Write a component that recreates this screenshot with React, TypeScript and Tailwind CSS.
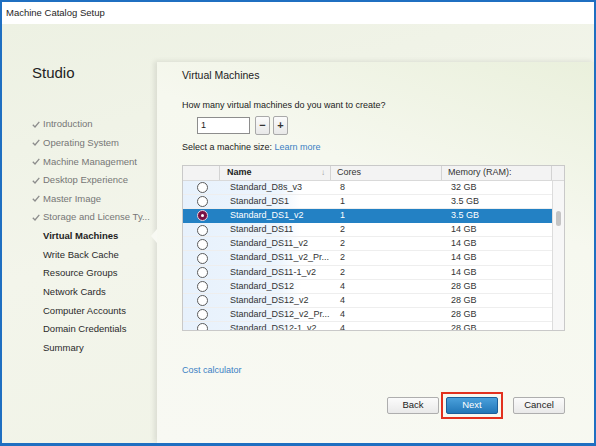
import React from "react";

const font = { fontFamily: '"Liberation Sans", Arial, sans-serif' };

const steps = [
  { label: "Introduction", done: true },
  { label: "Operating System", done: true },
  { label: "Machine Management", done: true },
  { label: "Desktop Experience", done: true },
  { label: "Master Image", done: true },
  { label: "Storage and License Ty...", done: true },
  { label: "Virtual Machines", current: true },
  { label: "Write Back Cache" },
  { label: "Resource Groups" },
  { label: "Network Cards" },
  { label: "Computer Accounts" },
  { label: "Domain Credentials" },
  { label: "Summary" },
];

const machines = [
  ["Standard_D8s_v3", "8", "32 GB"],
  ["Standard_DS1", "1", "3.5 GB"],
  ["Standard_DS1_v2", "1", "3.5 GB"],
  ["Standard_DS11", "2", "14 GB"],
  ["Standard_DS11_v2", "2", "14 GB"],
  ["Standard_DS11_v2_Pr...", "2", "14 GB"],
  ["Standard_DS11-1_v2", "2", "14 GB"],
  ["Standard_DS12", "4", "28 GB"],
  ["Standard_DS12_v2", "4", "28 GB"],
  ["Standard_DS12_v2_Pr...", "4", "28 GB"],
  ["Standard_DS12-1_v2", "4", "28 GB"],
];

function Check() {
  return (
    <svg width="8" height="7" viewBox="0 0 8 7" className="shrink-0">
      <path d="M0.8 3.8 L3 6 L7.3 0.9" fill="none" stroke="#8c8c8c" strokeWidth="1.3" />
    </svg>
  );
}

function Radio({ on }: { on?: boolean }) {
  if (on) {
    return (
      <div className="w-[11px] h-[11px] rounded-full bg-[#7a1244] border border-[#e8d6df] flex items-center justify-center">
        <div className="w-[3px] h-[3px] rounded-full bg-white" />
      </div>
    );
  }
  return <div className="w-[11px] h-[11px] rounded-full bg-white border border-[#5c5c5c]" />;
}

function Sidebar() {
  return (
    <div className="w-[155px] shrink-0 pl-[30px] pt-[40px]">
      <div className="text-[15px] leading-[18px] text-[#222]">Studio</div>
      <div className="mt-[33px] flex flex-col">
        {steps.map((s) => (
          <div key={s.label} className="h-[18.67px] flex items-center gap-[3px] text-[9.5px] whitespace-nowrap">
            <div className="w-[8px] flex justify-center">{s.done && <Check />}</div>
            <span
              className={
                s.current
                  ? "font-bold text-[#1e1e1e]"
                  : s.done
                  ? "text-[#767676]"
                  : "text-[#2a2a2a]"
              }
            >
              {s.label}
            </span>
          </div>
        ))}
      </div>
    </div>
  );
}

function MachineTable() {
  return (
    <div className="mt-[12px] w-[383px] h-[166px] border border-[#c9c9c9] bg-white flex flex-col text-[9px] text-[#333]">
      <div className="h-[15px] shrink-0 grid grid-cols-[37px_111px_111px_110px_12px] bg-[#f3f3f3] border-b border-[#d9d9d9]">
        <div className="border-r border-[#d3d3d3]" />
        <div className="border-r border-[#d3d3d3] flex items-center justify-between pl-[7px] pr-[5px] font-bold text-[#222]">
          <span>Name</span>
          <span className="text-[#9a9a9a] text-[8px]">↓</span>
        </div>
        <div className="border-r border-[#d3d3d3] flex items-center pl-[6px]">Cores</div>
        <div className="border-r border-[#d3d3d3] flex items-center pl-[6px]">Memory (RAM):</div>
        <div />
      </div>
      <div className="flex flex-1 min-h-0">
        <div className="flex-1 overflow-hidden bg-[linear-gradient(90deg,#e7f1fc_0px,#edf5fd_95px,#ffffff_118px)]">
          {machines.map(([name, cores, mem], i) => {
            const sel = i === 2;
            return (
              <div
                key={name}
                className={`h-[14.1px] shrink-0 grid grid-cols-[37px_111px_111px_110px] items-center border-b ${
                  sel ? "bg-[#2381c4] text-white border-[#2381c4]" : "border-[#eeeeee]"
                }`}
              >
                <div className="flex justify-center pl-[2px]">
                  <Radio on={sel} />
                </div>
                <div className="pl-[10px] whitespace-nowrap">{name}</div>
                <div className="pl-[9px]">{cores}</div>
                <div className="pl-[9px]">{mem}</div>
              </div>
            );
          })}
        </div>
        <div className="w-[12px] shrink-0 border-l border-[#dcdcdc] bg-[#f7f7f7] pt-[30px] flex justify-center">
          <div className="w-[5px] h-[15px] rounded-[3px] bg-[#c4c4c4]" />
        </div>
      </div>
    </div>
  );
}

function Btn({ children, primary }: { children: React.ReactNode; primary?: boolean }) {
  return (
    <div
      className={`w-[52px] h-[17px] flex items-center justify-center text-[9.5px] rounded-[2px] border ${
        primary
          ? "border-[#1b5f9a] text-white bg-[linear-gradient(180deg,#4aa0db,#2277b8)]"
          : "border-[#aeaeae] text-[#222] bg-[linear-gradient(180deg,#fbfbfb,#e9e9e9)]"
      }`}
    >
      {children}
    </div>
  );
}

function Panel() {
  return (
    <div className="relative flex-1 mt-[38px] pl-[25px] pr-[30px] pt-[7px] bg-[linear-gradient(200deg,#eaf0dc_0%,#f6f8ef_35%,#f8f9f3_100%)] shadow-[-3px_-1px_5px_rgba(0,0,0,0.09)]">
      <div className="absolute left-[-6px] top-[167px] w-0 h-0 border-y-[7px] border-y-transparent border-r-[6px] border-r-[#f8f9f3]" />
      <div className="text-[10.5px] leading-[13px] text-[#222]">Virtual Machines</div>
      <div className="mt-[17px] text-[9px] leading-[12px] text-[#222]">
        How many virtual machines do you want to create?
      </div>
      <div className="mt-[5px] ml-[15px] flex items-center">
        <div className="w-[53px] h-[17px] bg-white border border-[#8d8d8d] text-[9px] pl-[3px] flex items-center text-[#222]">
          1
        </div>
        <div className="ml-[5px] w-[15px] h-[19px] border border-[#a9a9a9] rounded-[2px] bg-[linear-gradient(180deg,#fbfbfb,#e8e8e8)] flex items-center justify-center text-[11px] font-bold text-[#333]">
          −
        </div>
        <div className="ml-[3px] w-[15px] h-[19px] border border-[#a9a9a9] rounded-[2px] bg-[linear-gradient(180deg,#fbfbfb,#e8e8e8)] flex items-center justify-center text-[11px] font-bold text-[#333]">
          +
        </div>
      </div>
      <div className="mt-[6px] text-[9px] leading-[12px] text-[#222]">
        Select a machine size: <span className="text-[#3b7fc4]">Learn more</span>
      </div>
      <MachineTable />
      <div className="mt-[33px] text-[9px] leading-[12px] text-[#3b7fc4]">Cost calculator</div>
      <div className="mt-[16px] flex items-center justify-end">
        <Btn>Back</Btn>
        <div className="ml-[2px] border-2 border-[#e2311f] p-[3px]">
          <Btn primary>Next</Btn>
        </div>
        <div className="ml-[10px]">
          <Btn>Cancel</Btn>
        </div>
      </div>
    </div>
  );
}

export default function App() {
  return (
    <div
      style={font}
      className="w-[596px] h-[446px] flex flex-col border-t-2 border-x-[2.5px] border-b-[3px] border-[#1f6fc1] overflow-hidden"
    >
      <div className="h-[22px] shrink-0 bg-white flex items-center pl-[4px] text-[9.5px] text-[#1e1e1e]">
        Machine Catalog Setup
      </div>
      <div className="flex-1 flex bg-[linear-gradient(165deg,#edf1e3_0%,#f3f5eb_45%,#f0f3e6_100%)]">
        <Sidebar />
        <Panel />
      </div>
    </div>
  );
}
